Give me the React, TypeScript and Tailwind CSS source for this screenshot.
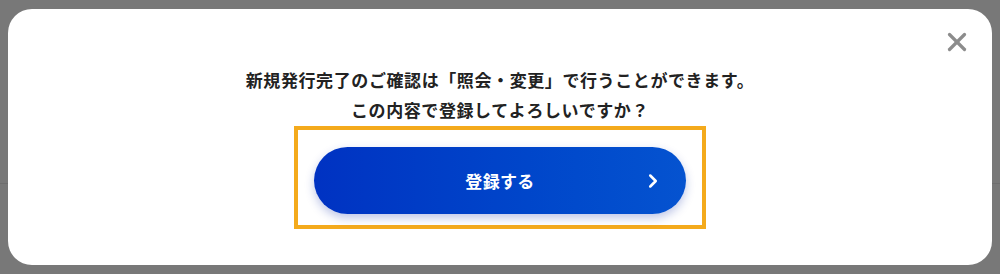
import { X, ChevronRight } from 'lucide-react';

export default function App() {
  return (
    <div
      className="w-[1000px] h-[274px] px-[8px] pt-[9px] pb-[9px] bg-[linear-gradient(to_bottom,#787878_183px,#6e6e6e_183px,#6e6e6e_184px,#787878_184px)]"
      style={{ fontFamily: '"Noto Sans CJK JP", "Noto Sans", sans-serif' }}
    >
      <div className="relative h-[256px] bg-white rounded-[24px] pt-[56px] flex flex-col items-center">
        <button
          type="button"
          aria-label="閉じる"
          className="absolute top-[18px] right-[20px] w-[30px] h-[30px] flex items-center justify-center text-[#8c8c8c]"
        >
          <X size={30} strokeWidth={2.6} />
        </button>

        <div className="text-center text-[17px] leading-[30px] font-bold text-[#222] tracking-[0.035em]">
          <p>新規発行完了のご確認は「照会・変更」で行うことができます。</p>
          <p>この内容で登録してよろしいですか？</p>
        </div>

        <div className="mt-[1px] w-[412px] h-[103px] border-[4px] border-[#f4aa1c] pt-[17px] px-[16px]">
          <button
            type="button"
            className="relative w-full h-[67px] rounded-full bg-gradient-to-r from-[#0032c2] to-[#0553d0] shadow-[0_4px_10px_rgba(20,50,170,0.28)] flex items-center justify-center text-white text-[17px] font-bold tracking-[0.02em]"
          >
            登録する
            <ChevronRight
              size={22}
              strokeWidth={2.8}
              className="absolute right-[22px] top-1/2 -translate-y-1/2"
            />
          </button>
        </div>
      </div>
    </div>
  );
}
